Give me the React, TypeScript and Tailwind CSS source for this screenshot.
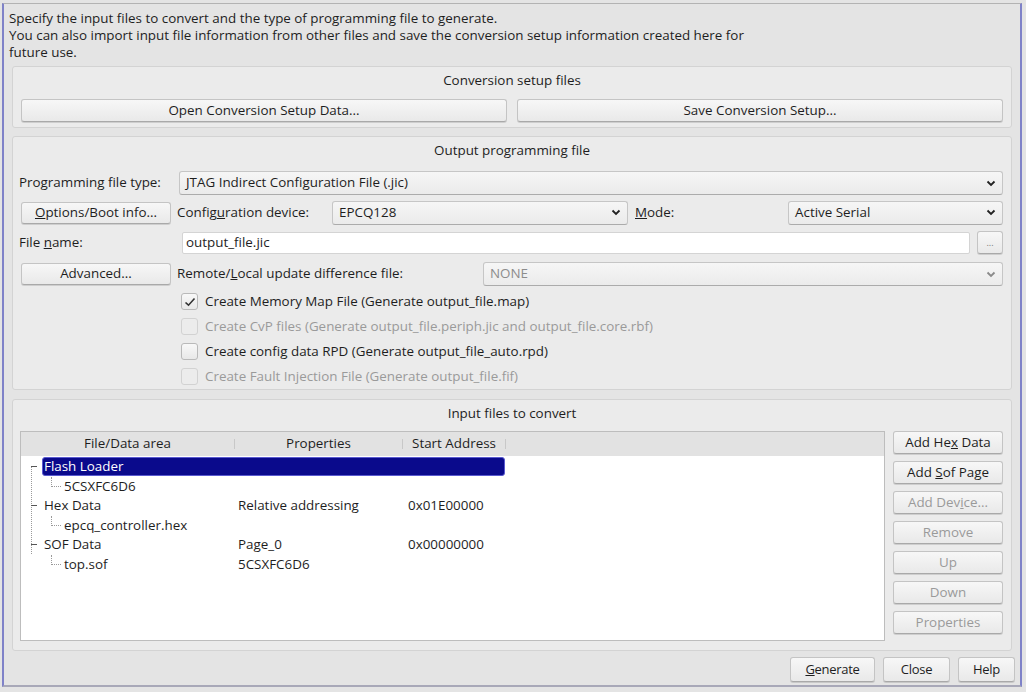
import React from 'react';

const font = { fontFamily: '"Open Sans", "DejaVu Sans", sans-serif' };

const Chevron = ({ disabled = false }: { disabled?: boolean }) => (
  <svg width="10" height="7" viewBox="0 0 10 7" className="shrink-0">
    <path d="M1.5 1.5 L5 5 L8.5 1.5" fill="none" stroke={disabled ? '#8a8a8a' : '#222'} strokeWidth="1.8" />
  </svg>
);

const Btn = ({
  children,
  className = '',
  disabled = false,
}: {
  children: React.ReactNode;
  className?: string;
  disabled?: boolean;
}) => (
  <div
    className={`flex items-center justify-center rounded-[3px] border border-[#c4c4c4] border-b-[#a9a9a9] bg-gradient-to-b from-[#f7f7f7] to-[#e9e9e9] shadow-[0_1px_0_rgba(0,0,0,0.12)] ${
      disabled ? 'text-[#9a9a9a]' : 'text-[#1e1e1e]'
    } ${className}`}
  >
    {children}
  </div>
);

const Combo = ({
  value,
  className = '',
  disabled = false,
}: {
  value: string;
  className?: string;
  disabled?: boolean;
}) => (
  <div
    className={`flex items-center justify-between rounded-[3px] border border-[#c6c6c6] border-b-[#ababab] bg-gradient-to-b from-[#f6f6f6] to-[#ebebeb] pl-[6px] pr-[6px] ${
      disabled ? 'text-[#8c8c8c]' : 'text-[#1e1e1e]'
    } ${className}`}
  >
    <span>{value}</span>
    <Chevron disabled={disabled} />
  </div>
);

const Check = ({ label, checked = false, disabled = false }: { label: string; checked?: boolean; disabled?: boolean }) => (
  <div className={`flex h-[25px] items-center gap-[7px] ${disabled ? 'text-[#9a9a9a]' : 'text-[#1e1e1e]'}`}>
    <div
      className={`flex h-[17px] w-[17px] items-center justify-center rounded-[3px] border ${
        disabled ? 'border-[#d2d2d2] bg-[#ececec]' : 'border-[#b9b9b9] bg-gradient-to-b from-[#f8f8f8] to-[#e8e8e8]'
      }`}
    >
      {checked && (
        <svg width="12" height="10" viewBox="0 0 12 10">
          <path d="M1.5 5.5 L4.5 8.2 L10.5 1.5" fill="none" stroke="#333" strokeWidth="1.6" />
        </svg>
      )}
    </div>
    <span>{label}</span>
  </div>
);

const Group = ({ title, className = '', children }: { title: string; className?: string; children: React.ReactNode }) => (
  <div className={`mx-[8px] flex flex-col rounded-[3px] border border-[#d3d3d3] bg-[#ebebeb] ${className}`}>
    <div className="flex h-[26px] items-center justify-center pt-[2px] text-[#1e1e1e]">{title}</div>
    {children}
  </div>
);

type Row = { name: string; level: 0 | 1; props?: string; addr?: string; selected?: boolean };

const rows: Row[] = [
  { name: 'Flash Loader', level: 0, selected: true },
  { name: '5CSXFC6D6', level: 1 },
  { name: 'Hex Data', level: 0, props: 'Relative addressing', addr: '0x01E00000' },
  { name: 'epcq_controller.hex', level: 1 },
  { name: 'SOF Data', level: 0, props: 'Page_0', addr: '0x00000000' },
  { name: 'top.sof', level: 1, props: '5CSXFC6D6' },
];

export default function App() {
  return (
    <div className="h-[692px] w-[1026px] overflow-hidden bg-[#e4e4e4] text-[13.4px] leading-none" style={font}>
      <div className="ml-[2px] mt-[3px] flex h-[684px] w-[1020px] flex-col border-x-2 border-t border-b-2 border-x-[#7f82c8] border-t-[#b3b3b3] border-b-[#a8a8b8] bg-[#e4e4e4]">
        <div className="px-[5px] pt-[6px] text-[#1e1e1e] leading-[17px]">
          <div>Specify the input files to convert and the type of programming file to generate.</div>
          <div>You can also import input file information from other files and save the conversion setup information created here for</div>
          <div>future use.</div>
        </div>

        <Group title="Conversion setup files" className="mt-[5px] h-[62px]">
          <div className="flex gap-[10px] px-[8px] pt-[6px]">
            <Btn className="h-[23px] flex-1">Open Conversion Setup Data...</Btn>
            <Btn className="h-[23px] flex-1">Save Conversion Setup...</Btn>
          </div>
        </Group>

        <Group title="Output programming file" className="mt-[8px] h-[254px]">
          <div className="flex flex-col gap-[7px] pl-[6px] pr-[8px] pt-[8px] text-[#1e1e1e]">
            <div className="flex h-[24px] items-center">
              <span className="w-[160px]">Programming file type:</span>
              <Combo value="JTAG Indirect Configuration File (.jic)" className="h-[24px] flex-1" />
            </div>
            <div className="mt-[-1px] flex h-[23px] items-center">
              <Btn className="ml-[2px] h-[22px] w-[150px]">
                <span>
                  <u>O</u>ptions/Boot info...
                </span>
              </Btn>
              <span className="ml-[6px] w-[155px]">
                Config<u>u</u>ration device:
              </span>
              <Combo value="EPCQ128" className="h-[24px] w-[296px]" />
              <span className="ml-[7px] w-[153px]">
                <u>M</u>ode:
              </span>
              <Combo value="Active Serial" className="h-[24px] flex-1" />
            </div>
            <div className="flex h-[23px] items-center">
              <span className="w-[163px]">
                File <u>n</u>ame:
              </span>
              <div className="flex h-[22px] flex-1 items-center rounded-[2px] border border-[#d4d4d4] bg-white pl-[3px]">output_file.jic</div>
              <Btn className="ml-[7px] h-[23px] w-[26px] text-[9px] text-[#777]">...</Btn>
            </div>
            <div className="mt-[1px] flex h-[24px] items-center">
              <Btn className="ml-[2px] h-[22px] w-[150px]">Advanced...</Btn>
              <span className="ml-[6px] w-[306px]">
                Remote/<u>L</u>ocal update difference file:
              </span>
              <Combo value="NONE" disabled className="h-[24px] flex-1" />
            </div>
            <div className="ml-[162px] mt-[-4px] flex flex-col">
              <Check label="Create Memory Map File (Generate output_file.map)" checked />
              <Check label="Create CvP files (Generate output_file.periph.jic and output_file.core.rbf)" disabled />
              <Check label="Create config data RPD (Generate output_file_auto.rpd)" />
              <Check label="Create Fault Injection File (Generate output_file.fif)" disabled />
            </div>
          </div>
        </Group>

        <Group title="Input files to convert" className="mt-[9px] h-[252px]">
          <div className="flex gap-[8px] pl-[7px] pr-[8px] pt-[5px]">
            <div className="flex h-[210px] flex-1 flex-col border border-[#bdbdbd] bg-white">
              <div className="flex h-[24px] shrink-0 items-center bg-[#e2e2e2] text-[#1e1e1e]">
                <div className="flex w-[213px] justify-center">File/Data area</div>
                <div className="h-[10px] w-px bg-[#c8c8c8]" />
                <div className="flex w-[167px] justify-center">Properties</div>
                <div className="h-[10px] w-px bg-[#c8c8c8]" />
                <div className="flex w-[102px] justify-center">Start Address</div>
                <div className="h-[10px] w-px bg-[#c8c8c8]" />
              </div>
              <div className="relative flex flex-col pt-[1px] text-[#1e1e1e]">
                <div className="absolute left-[10px] top-[10px] h-[88px] border-l border-dotted border-[#9a9a9a]" />
                {rows.map((r) => (
                  <div key={r.name} className="relative flex h-[19.5px] items-center">
                    {r.level === 0 ? (
                      <div className="absolute left-[10px] top-[9px] w-[6px] border-t border-[#555]" />
                    ) : (
                      <>
                        <div className="absolute left-[30px] top-0 h-[10px] border-l border-dotted border-[#9a9a9a]" />
                        <div className="absolute left-[30px] top-[9px] w-[10px] border-t border-dotted border-[#9a9a9a]" />
                      </>
                    )}
                    <div
                      className={`flex h-[19px] items-center ${
                        r.selected
                          ? 'ml-[21px] w-[463px] rounded-[3px] border border-[#5a5ad0] bg-[#0a0a8c] pl-[1px] text-white'
                          : r.level === 0
                          ? 'ml-[23px] w-[194px]'
                          : 'ml-[43px] w-[174px]'
                      }`}
                    >
                      {r.name}
                    </div>
                    {!r.selected && (
                      <>
                        <div className="w-[170px]">{r.props}</div>
                        <div>{r.addr}</div>
                      </>
                    )}
                  </div>
                ))}
              </div>
            </div>
            <div className="flex w-[110px] flex-col gap-[7px]">
              <Btn className="h-[23px]">
                <span>
                  Add He<u>x</u> Data
                </span>
              </Btn>
              <Btn className="h-[23px]">
                <span>
                  Add <u>S</u>of Page
                </span>
              </Btn>
              <Btn className="h-[23px]" disabled>
                <span>
                  Add Dev<u>i</u>ce...
                </span>
              </Btn>
              <Btn className="h-[23px]" disabled>
                Remove
              </Btn>
              <Btn className="h-[23px]" disabled>
                Up
              </Btn>
              <Btn className="h-[23px]" disabled>
                Down
              </Btn>
              <Btn className="h-[23px]" disabled>
                Properties
              </Btn>
            </div>
          </div>
        </Group>

        <div className="mt-[6px] flex justify-end gap-[8px] pr-[5px] text-[13px] tracking-[-0.3px]">
          <Btn className="h-[25px] w-[85px]">
            <span>
              <u>G</u>enerate
            </span>
          </Btn>
          <Btn className="h-[25px] w-[67px]">Close</Btn>
          <Btn className="h-[25px] w-[57px]">Help</Btn>
        </div>
      </div>
    </div>
  );
}
